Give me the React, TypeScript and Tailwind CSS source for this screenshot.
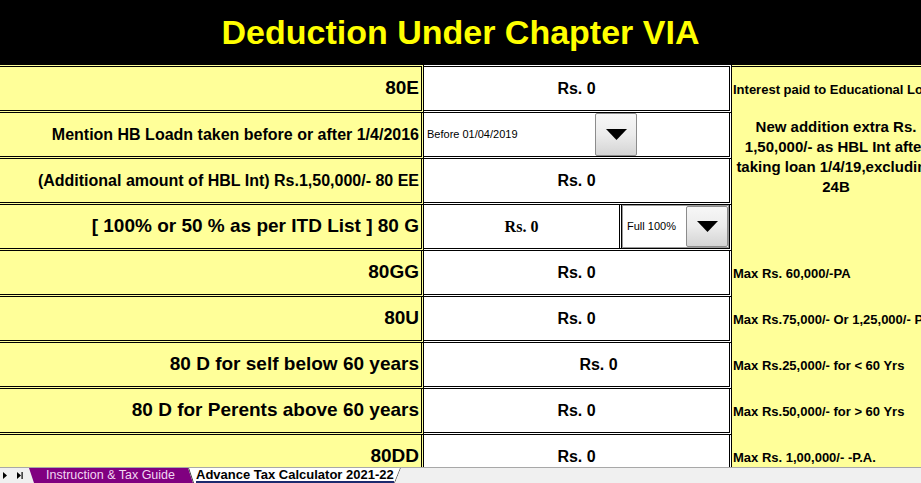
import React from "react";

const F = "font-['Liberation_Sans',Arial,sans-serif]";

function DropBtn() {
  return (
    <div className="w-[42px] h-full shrink-0 rounded-[2px] border border-[#8c8c8c] bg-gradient-to-b from-[#f7f7f7] via-[#ececec] to-[#d4d4d4] flex items-center justify-center">
      <svg width="21" height="11" viewBox="0 0 21 11">
        <polygon points="0,0 21,0 10.5,11" fill="#000" />
      </svg>
    </div>
  );
}

const labelBase =
  "bg-[#ffff99] border-r-[3px] border-b-[3px] border-double border-black flex items-center justify-end pr-[2px] font-bold text-black whitespace-nowrap overflow-hidden";
const valueBase =
  "bg-white border-r-[3px] border-b-[3px] border-double border-black flex items-center justify-center font-bold text-[16px] text-black whitespace-nowrap";
const noteBase =
  "bg-[#ffff99] flex items-center pl-[1px] font-bold text-[13px] text-black whitespace-nowrap";

export default function App() {
  return (
    <div className={`${F} w-[921px] h-[483px] overflow-hidden flex flex-col bg-white`}>
      <div className="h-[64px] shrink-0 bg-black flex items-center justify-center">
        <span className="text-[34px] font-bold text-[#ffff00] leading-none">Deduction Under Chapter VIA</span>
      </div>

      <div className="flex-1 min-h-0 overflow-hidden">
        <div className="grid grid-cols-[424px_308px_189px] grid-rows-[49px_repeat(8,46px)]">
          {/* Row 1 */}
          <div className={`${labelBase} border-t-[3px] text-[19px]`}>80E</div>
          <div className={`${valueBase} border-t-[3px]`}>Rs. 0</div>
          <div className={`${noteBase} border-t-[3px] border-double border-black`}>Interest paid to Educational Loan</div>

          {/* Row 2 */}
          <div className={`${labelBase} text-[16px]`}>Mention HB Loadn taken before or after 1/4/2016</div>
          <div className="bg-white border-r-[3px] border-b-[3px] border-double border-black flex items-stretch">
            <div className="w-[213px] h-full flex items-stretch">
              <div className="flex-1 flex items-center pl-[3px] text-[11px] text-black font-normal">Before 01/04/2019</div>
              <DropBtn />
            </div>
          </div>
          <div className="row-span-3 bg-[#ffff99] overflow-visible">
            <div className="w-[208px] pt-[4px] flex flex-col items-center font-bold text-[15px] leading-[20px] text-black whitespace-nowrap">
              <span>New addition extra Rs.</span>
              <span>1,50,000/- as HBL Int after</span>
              <span>taking loan 1/4/19,excluding</span>
              <span>24B</span>
            </div>
          </div>

          {/* Row 3 */}
          <div className={`${labelBase} text-[16px]`}>(Additional amount of HBL Int) Rs.1,50,000/- 80 EE</div>
          <div className={valueBase}>Rs. 0</div>

          {/* Row 4 */}
          <div className={`${labelBase} text-[19px]`}>[ 100% or 50 % as per ITD List ] 80 G</div>
          <div className="bg-white border-r-[3px] border-b-[3px] border-double border-black flex items-stretch">
            <div className="w-[198px] shrink-0 border-r-[3px] border-double border-black flex items-center justify-center font-bold text-[16px] font-['Liberation_Serif','Times_New_Roman',serif]">
              Rs. 0
            </div>
            <div className="flex-1 flex items-stretch border border-[#9a9a9a]">
              <div className="flex-1 flex items-center pl-[4px] text-[11px] text-black">Full 100%</div>
              <DropBtn />
            </div>
          </div>

          {/* Row 5 */}
          <div className={`${labelBase} text-[19px]`}>80GG</div>
          <div className={valueBase}>Rs. 0</div>
          <div className={noteBase}>Max Rs. 60,000/-PA</div>

          {/* Row 6 */}
          <div className={`${labelBase} text-[19px]`}>80U</div>
          <div className={valueBase}>Rs. 0</div>
          <div className={noteBase}>Max Rs.75,000/- Or 1,25,000/- PA</div>

          {/* Row 7 */}
          <div className={`${labelBase} text-[19px]`}>80 D for self below 60 years</div>
          <div className={`${valueBase} pl-[44px]`}>Rs. 0</div>
          <div className={noteBase}>Max Rs.25,000/- for &lt; 60 Yrs</div>

          {/* Row 8 */}
          <div className={`${labelBase} text-[19px]`}>80 D for Perents above 60 years</div>
          <div className={valueBase}>Rs. 0</div>
          <div className={noteBase}>Max Rs.50,000/- for &gt; 60 Yrs</div>

          {/* Row 9 */}
          <div className={`${labelBase} text-[19px]`}>80DD</div>
          <div className={valueBase}>Rs. 0</div>
          <div className={noteBase}>Max Rs. 1,00,000/- -P.A.</div>
        </div>
      </div>

      <div className="h-[16px] shrink-0 bg-[#f0f0f0] border-t border-[#a8a8a8] flex items-stretch">
        <div className="w-[29px] shrink-0 flex items-center">
          <svg width="29" height="15" viewBox="0 0 29 15">
            <polygon points="3,4 7,7.5 3,11" fill="#000" />
            <polygon points="17,4 21,7.5 17,11" fill="#000" />
            <rect x="21.5" y="4" width="1.2" height="7" fill="#000" />
          </svg>
        </div>
        <div className="w-[164px] shrink-0 bg-[#800080] [clip-path:polygon(0_0,100%_0,100%_100%,5px_100%)] flex items-center pl-[17px] text-[12.5px] text-[#f2d6f2] whitespace-nowrap">
          Instruction &amp; Tax Guide
        </div>
        <div className="relative -ml-[5px] w-[213px] shrink-0 bg-white [clip-path:polygon(0_0,100%_0,calc(100%-6px)_100%,5px_100%)] flex items-stretch">
          <svg className="absolute inset-0" width="213" height="15" viewBox="0 0 213 15">
            <line x1="0.5" y1="0" x2="5.5" y2="15" stroke="#333" strokeWidth="1" />
            <line x1="212.5" y1="0" x2="206.5" y2="15" stroke="#666" strokeWidth="1" />
          </svg>
          <div className="ml-[8px] border-b-2 border-[#1c2a6e] flex items-center text-[13px] font-bold text-black whitespace-nowrap leading-none">
            Advance Tax Calculator 2021-22
          </div>
        </div>
      </div>
    </div>
  );
}
